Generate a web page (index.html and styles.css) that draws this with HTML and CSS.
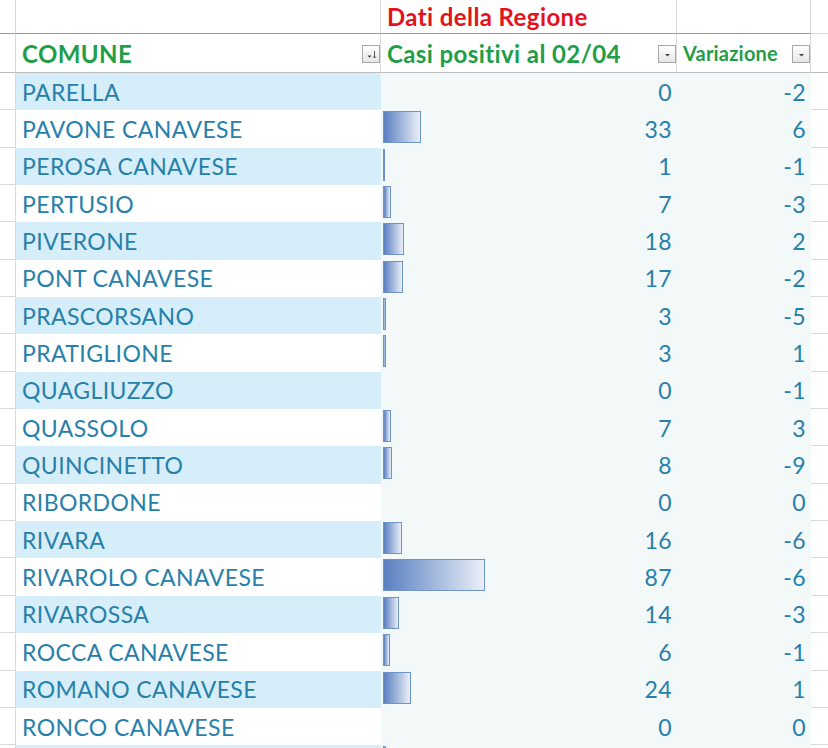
FILE: index.html
```html
<!DOCTYPE html>
<html lang="it">
<head>
<meta charset="utf-8">
<title>Dati della Regione</title>
<link rel="stylesheet" href="styles.css">
</head>
<body>
<div class="sheet">
  <div class="row hdr1">
    <div class="m"></div>
    <div class="cell ca"></div>
    <div class="cell cb"><span class="red">Dati della Regione</span></div>
    <div class="cell cc"></div>
    <div class="m mr"></div>
  </div>
  <div class="row hdr2">
    <div class="m"></div>
    <div class="cell ca"><span class="green">COMUNE</span>
      <span class="dd"><svg width="15" height="15" viewBox="0 0 15 15"><path d="M3.5 8.5h4l-2 2.2z" fill="#444"/><path d="M10.5 4v7M9.3 9.6l1.2 1.4 1.2-1.4" stroke="#444" stroke-width="0.9" fill="none"/></svg></span></div>
    <div class="cell cb"><span class="green">Casi positivi al 02/04</span>
      <span class="dd"><svg width="15" height="15" viewBox="0 0 15 15"><path d="M5 7h5l-2.5 2.6z" fill="#444"/></svg></span></div>
    <div class="cell cc"><span class="green small">Variazione</span>
      <span class="dd"><svg width="15" height="15" viewBox="0 0 15 15"><path d="M5 7h5l-2.5 2.6z" fill="#444"/></svg></span></div>
    <div class="m mr"></div>
  </div>

  <div class="row data odd"><div class="m"></div><div class="cell ca">PARELLA</div><div class="cell cb"><span class="num">0</span></div><div class="cell cc"><span class="num">-2</span></div><div class="m mr"></div></div>
  <div class="row data"><div class="m"></div><div class="cell ca">PAVONE CANAVESE</div><div class="cell cb"><span class="bar" style="width:38px"></span><span class="num">33</span></div><div class="cell cc"><span class="num">6</span></div><div class="m mr"></div></div>
  <div class="row data odd"><div class="m"></div><div class="cell ca">PEROSA CANAVESE</div><div class="cell cb"><span class="bar" style="width:1px"></span><span class="num">1</span></div><div class="cell cc"><span class="num">-1</span></div><div class="m mr"></div></div>
  <div class="row data"><div class="m"></div><div class="cell ca">PERTUSIO</div><div class="cell cb"><span class="bar" style="width:8px"></span><span class="num">7</span></div><div class="cell cc"><span class="num">-3</span></div><div class="m mr"></div></div>
  <div class="row data odd"><div class="m"></div><div class="cell ca">PIVERONE</div><div class="cell cb"><span class="bar" style="width:21px"></span><span class="num">18</span></div><div class="cell cc"><span class="num">2</span></div><div class="m mr"></div></div>
  <div class="row data"><div class="m"></div><div class="cell ca">PONT CANAVESE</div><div class="cell cb"><span class="bar" style="width:20px"></span><span class="num">17</span></div><div class="cell cc"><span class="num">-2</span></div><div class="m mr"></div></div>
  <div class="row data odd"><div class="m"></div><div class="cell ca">PRASCORSANO</div><div class="cell cb"><span class="bar" style="width:3px"></span><span class="num">3</span></div><div class="cell cc"><span class="num">-5</span></div><div class="m mr"></div></div>
  <div class="row data"><div class="m"></div><div class="cell ca">PRATIGLIONE</div><div class="cell cb"><span class="bar" style="width:3px"></span><span class="num">3</span></div><div class="cell cc"><span class="num">1</span></div><div class="m mr"></div></div>
  <div class="row data odd"><div class="m"></div><div class="cell ca">QUAGLIUZZO</div><div class="cell cb"><span class="num">0</span></div><div class="cell cc"><span class="num">-1</span></div><div class="m mr"></div></div>
  <div class="row data"><div class="m"></div><div class="cell ca">QUASSOLO</div><div class="cell cb"><span class="bar" style="width:8px"></span><span class="num">7</span></div><div class="cell cc"><span class="num">3</span></div><div class="m mr"></div></div>
  <div class="row data odd"><div class="m"></div><div class="cell ca">QUINCINETTO</div><div class="cell cb"><span class="bar" style="width:9px"></span><span class="num">8</span></div><div class="cell cc"><span class="num">-9</span></div><div class="m mr"></div></div>
  <div class="row data"><div class="m"></div><div class="cell ca">RIBORDONE</div><div class="cell cb"><span class="num">0</span></div><div class="cell cc"><span class="num">0</span></div><div class="m mr"></div></div>
  <div class="row data odd"><div class="m"></div><div class="cell ca">RIVARA</div><div class="cell cb"><span class="bar" style="width:19px"></span><span class="num">16</span></div><div class="cell cc"><span class="num">-6</span></div><div class="m mr"></div></div>
  <div class="row data"><div class="m"></div><div class="cell ca">RIVAROLO CANAVESE</div><div class="cell cb"><span class="bar" style="width:102px"></span><span class="num">87</span></div><div class="cell cc"><span class="num">-6</span></div><div class="m mr"></div></div>
  <div class="row data odd"><div class="m"></div><div class="cell ca">RIVAROSSA</div><div class="cell cb"><span class="bar" style="width:16px"></span><span class="num">14</span></div><div class="cell cc"><span class="num">-3</span></div><div class="m mr"></div></div>
  <div class="row data"><div class="m"></div><div class="cell ca">ROCCA CANAVESE</div><div class="cell cb"><span class="bar" style="width:7px"></span><span class="num">6</span></div><div class="cell cc"><span class="num">-1</span></div><div class="m mr"></div></div>
  <div class="row data odd"><div class="m"></div><div class="cell ca">ROMANO CANAVESE</div><div class="cell cb"><span class="bar" style="width:28px"></span><span class="num">24</span></div><div class="cell cc"><span class="num">1</span></div><div class="m mr"></div></div>
  <div class="row data"><div class="m"></div><div class="cell ca">RONCO CANAVESE</div><div class="cell cb"><span class="num">0</span></div><div class="cell cc"><span class="num">0</span></div><div class="m mr"></div></div>
  <div class="row data odd"><div class="m"></div><div class="cell ca"></div><div class="cell cb"><span class="bar" style="width:3px"></span></div><div class="cell cc"></div><div class="m mr"></div></div>
</div>
</body>
</html>
```

FILE: styles.css
```css
* { box-sizing: border-box; }
html, body { margin: 0; padding: 0; }
body {
  width: 828px;
  height: 748px;
  overflow: hidden;
  background: #ffffff;
  font-family: "Lato", "Liberation Sans", sans-serif;
}
.sheet { display: flex; flex-direction: column; }
.row {
  display: grid;
  grid-template-columns: 16px 365px 296px 134px 1fr;
}
.m {
  border-right: 1px solid #d9d9d9;
  border-bottom: 1px solid #d9d9d9;
}
.m.mr { border-right: none; }
.cell {
  display: flex;
  align-items: center;
  min-width: 0;
  white-space: nowrap;
}
.hdr1 { height: 34px; }
.hdr1 .cell {
  border-right: 1px solid #d9d9d9;
  border-bottom: 1px solid #62a9d4;
  padding-left: 6px;
}
.hdr1 .m { border-bottom: 1px solid #62a9d4; }
.hdr1 .mr { border-bottom: 1px solid #d9d9d9; }
.hdr2 { height: 39px; }
.hdr2 .cell {
  border-right: 1px solid #d9d9d9;
  border-bottom: 1px solid #bdbdbd;
  padding-left: 6px;
  justify-content: space-between;
  align-items: center;
}
.hdr2 .m { border-bottom: 1px solid #bdbdbd; }
.red { color: #e3121b; font-weight: 700; font-size: 24px; letter-spacing: 0.4px; }
.green { color: #1f9e48; font-weight: 700; font-size: 24px; letter-spacing: 0.4px; }
.green.small { font-size: 20px; letter-spacing: 0.2px; }
.dd {
  width: 18px;
  height: 18px;
  margin-top: 2px;
  margin-right: 0;
  border: 1px solid #a8a8a8;
  background: linear-gradient(#ffffff, #e6e6e6);
  display: flex;
  align-items: center;
  justify-content: center;
  flex-shrink: 0;
}
.dd svg { display: block; }
.data { height: 37.35px; }
.data .cell {
  font-size: 23px;
  letter-spacing: 0.4px;
  color: #2780aa;
}
.data .ca { padding-left: 6px; background: #ffffff; }
.data.odd .ca { background: #d6eef9; }
.data .cb, .data .cc {
  background: #f3f8f8;
  justify-content: flex-end;
  padding-right: 5px;
  position: relative;
}
.bar {
  position: absolute;
  left: 2px;
  top: 1px;
  height: 32px;
  border: 1px solid #6f92c9;
  background: linear-gradient(to right, #5a7fc0, #e9eff8);
}
.num { position: relative; }
```
